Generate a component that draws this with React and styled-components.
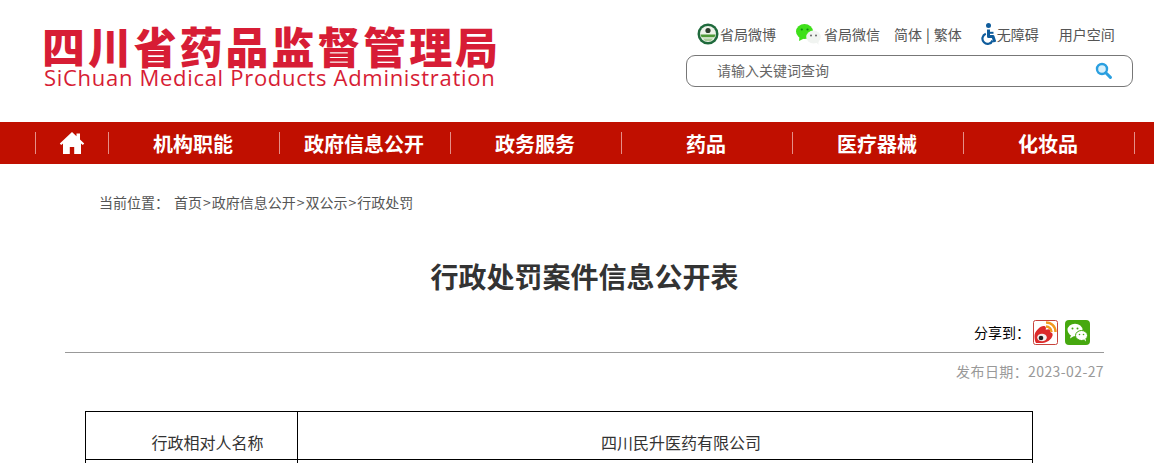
import React from 'react';
import styled, { createGlobalStyle } from 'styled-components';

const GlobalStyle = createGlobalStyle`
  html, body {
    margin: 0;
    padding: 0;
    height: 463px;
    overflow: hidden;
    background: #fff;
    font-family: "Noto Sans CJK SC", "Liberation Sans", sans-serif;
  }
`;

const Page = styled.div`
  width: 1154px;
`;

const Header = styled.header`
  height: 122px;
  display: flex;
  justify-content: space-between;
  padding: 0 21px 0 42px;
  box-sizing: border-box;
`;

const Logo = styled.div`
  display: flex;
  flex-direction: column;
  padding-top: 22px;
  color: #d71d35;
`;

const LogoCn = styled.div`
  font-size: 43px;
  line-height: 46px;
  font-weight: 900;
  letter-spacing: 2.9px;
  white-space: nowrap;
`;

const LogoEn = styled.div`
  font-family: "Open Sans", sans-serif;
  font-size: 22px;
  line-height: 18px;
  font-weight: 500;
  letter-spacing: 0.7px;
  white-space: nowrap;
  margin-left: 2px;
`;

const Tools = styled.div`
  width: 447px;
  padding-top: 21px;
`;

const LinkRow = styled.div`
  display: flex;
  align-items: center;
  height: 26px;
  font-size: 14px;
  color: #555;
  white-space: nowrap;
`;

const ToolLink = styled.span`
  display: flex;
  align-items: center;
  margin-left: ${(p) => p.$left}px;
`;

const LangBar = styled.span`
  margin: 0 4px;
  color: #333;
`;

const WechatLabel = styled.span`
  margin-left: 3px;
`;

const SearchBox = styled.div`
  margin-top: 8px;
  height: 32px;
  box-sizing: border-box;
  border: 1px solid #777;
  border-radius: 9px;
  display: flex;
  align-items: center;
  justify-content: space-between;
  padding: 0 20px 2px 30px;
  font-size: 14px;
  color: #666;
`;

const Nav = styled.nav`
  height: 42px;
  background: #c00f00;
  display: flex;
  padding-left: 35px;
  align-items: center;
`;

const NavItem = styled.div`
  width: ${(p) => p.$width}px;
  height: 22px;
  box-sizing: border-box;
  border-left: 1px solid #e58f88;
  border-right: ${(p) => (p.$last ? '1px solid #e58f88' : 'none')};
  padding-right: ${(p) => (p.$home ? 0 : 2)}px;
  display: flex;
  align-items: center;
  justify-content: center;
  color: #fff;
  font-size: 20px;
  font-weight: 700;
`;

const Crumbs = styled.div`
  padding: 28px 0 0 99px;
  font-size: 14px;
  line-height: 20px;
  color: #555;
`;

const CrumbLabel = styled.span`
  margin-right: 5px;
`;

const CrumbSep = styled.span`
  padding: 0 1px;
`;

const Article = styled.main`
  margin: 0 50px 0 65px;
`;

const Title = styled.h1`
  margin: 42px 0 0;
  text-align: center;
  font-size: 28px;
  line-height: 44px;
  font-weight: 700;
  color: #333;
`;

const ShareRow = styled.div`
  display: flex;
  justify-content: flex-end;
  align-items: center;
  height: 28px;
  margin-top: 20px;
  padding: 0 14px 6px 0;
  border-bottom: 1px solid #999;
  font-size: 14px;
  color: #000;
`;

const ShareIcon = styled.svg`
  width: 25px;
  height: 25px;
  margin-left: ${(p) => p.$left}px;
`;

const DateLine = styled.div`
  margin-top: 8px;
  text-align: right;
  font-size: 14px;
  line-height: 20px;
  color: #999;
  letter-spacing: 0.4px;
`;

const Table = styled.table`
  margin: 30px 0 0 20px;
  width: 948px;
  border-collapse: collapse;
  table-layout: fixed;
  font-size: 16px;
  color: #333;
`;

const Cell = styled.td`
  border: 1px solid #000;
  height: 48px;
  box-sizing: border-box;
  padding: 13px 0 0;
  text-align: center;
  text-indent: 32px;
  line-height: 30px;
  width: ${(p) => (p.$narrow ? '212px' : 'auto')};
`;

const WeiboBadge = () => (
  <svg width="22" height="22" viewBox="0 0 22 22" style={{ marginRight: 1 }}>
    <circle cx="11" cy="11" r="10.500" fill="#1f6a3c" />
    <circle cx="11" cy="11" r="8" fill="#eef3ea" />
    <circle cx="11" cy="7.500" r="2.600" fill="#2c3d2c" />
    <path d="M3.500 11.500h15l-1 2.800h-13z" fill="#4f9a38" />
    <path d="M6 15.500h10l-2 2.500H8z" fill="#a9cf9c" />
  </svg>
);

const WechatBubbles = () => (
  <svg width="25" height="21" viewBox="0 0 25 21">
    <ellipse cx="8.500" cy="7.500" rx="8.500" ry="7.500" fill="#3fe01a" />
    <path d="M3.500 12.500l-.5 4.500 5-2.500z" fill="#3fe01a" />
    <circle cx="5.800" cy="5.500" r="1.100" fill="#0c8a10" />
    <circle cx="11.500" cy="5.500" r="1.100" fill="#0c8a10" />
    <ellipse cx="17.500" cy="13" rx="7.300" ry="6.500" fill="#f1f4f1" />
    <path d="M20 18l2.500 3-.2-4.500z" fill="#f1f4f1" />
    <circle cx="15" cy="11.500" r="1" fill="#666" />
    <circle cx="20" cy="11.500" r="1" fill="#666" />
  </svg>
);

const WheelchairIcon = () => (
  <svg width="18" height="22" viewBox="0 0 18 22">
    <circle cx="9.500" cy="2.600" r="2.500" fill="#0f5c9c" />
    <path d="M9.500 6.500v7h4.500l1.800 5.500" fill="none" stroke="#0f5c9c" strokeWidth="3" strokeLinejoin="round" />
    <path d="M9.500 9.800h5" stroke="#0f5c9c" strokeWidth="2" />
    <path d="M6.800 10.800a5.200 5.200 0 1 0 6.700 6.700" fill="none" stroke="#0f5c9c" strokeWidth="2.200" />
  </svg>
);

const SearchIcon = () => (
  <svg width="17" height="17" viewBox="0 0 17 17">
    <circle cx="7" cy="7" r="5" fill="#d8f0fb" stroke="#2a9fe0" strokeWidth="2.400" />
    <path d="M10.800 10.800l4.600 4.600" stroke="#2a9fe0" strokeWidth="3" strokeLinecap="round" />
  </svg>
);

const HomeIcon = () => (
  <svg width="26" height="24" viewBox="0 0 26 24">
    <path d="M13 1L0.800 12.500l1.400 1.600L4 12.600V23h6.800v-7h4.400v7H22V12.600l1.800 1.500 1.400-1.600L21 8.600V2.500h-3.500v2.800z" fill="#fff" />
  </svg>
);

const navItems = ['机构职能', '政府信息公开', '政务服务', '药品', '医疗器械', '化妆品'];

const App = () => (
  <Page>
    <GlobalStyle />
    <Header>
      <Logo>
        <LogoCn>四川省药品监督管理局</LogoCn>
        <LogoEn>SiChuan Medical Products Administration</LogoEn>
      </Logo>
      <Tools>
        <LinkRow>
          <ToolLink $left={11}><WeiboBadge />省局微博</ToolLink>
          <ToolLink $left={20}><WechatBubbles /><WechatLabel>省局微信</WechatLabel></ToolLink>
          <ToolLink $left={14}>简体<LangBar>|</LangBar>繁体</ToolLink>
          <ToolLink $left={17}><WheelchairIcon />无障碍</ToolLink>
          <ToolLink $left={20}>用户空间</ToolLink>
        </LinkRow>
        <SearchBox>
          请输入关键词查询
          <SearchIcon />
        </SearchBox>
      </Tools>
    </Header>
    <Nav>
      <NavItem $home $width={73}><HomeIcon /></NavItem>
      {navItems.map((item, i) => (
        <NavItem key={item} $width={i === navItems.length - 1 ? 172 : 171} $last={i === navItems.length - 1}>
          {item}
        </NavItem>
      ))}
    </Nav>
    <Crumbs>
      <CrumbLabel>当前位置：</CrumbLabel>首页<CrumbSep>&gt;</CrumbSep>政府信息公开<CrumbSep>&gt;</CrumbSep>双公示<CrumbSep>&gt;</CrumbSep>行政处罚
    </Crumbs>
    <Article>
      <Title>行政处罚案件信息公开表</Title>
      <ShareRow>
        分享到：
        <ShareIcon $left={3} viewBox="0 0 25 25">
          <rect x="0.500" y="0.500" width="24" height="24" rx="2" fill="#fff" stroke="#c8433c" />
          <path d="M1.500 16c0-5 6-10 9-10 2.500 0 2.800 2 2.200 3.800 3.300-1.200 5.500-.3 4.500 2.200 2.300.6 2.800 2.300 2.300 3.800-1 3.600-5.500 7.200-10 7.200H3c-1-1.500-1.500-4-1.500-7z" fill="#dc2a2a" />
          <ellipse cx="9" cy="17.500" rx="4.800" ry="3.800" fill="#f4eeee" />
          <circle cx="8" cy="18" r="2.300" fill="#222" />
          <path d="M13 2.500c5.500 0 9.500 4 9.500 9.500M13 6.500c3 0 5.500 2.500 5.500 5.500" fill="none" stroke="#f29a1f" strokeWidth="2.400" />
        </ShareIcon>
        <ShareIcon $left={7} viewBox="0 0 25 25">
          <rect width="25" height="25" rx="4" fill="#46a80f" />
          <ellipse cx="10" cy="10" rx="7.500" ry="6.300" fill="#fff" />
          <path d="M6 15l-1 3.500 4-2.500z" fill="#fff" />
          <ellipse cx="16.500" cy="15.500" rx="6" ry="5" fill="#fff" stroke="#46a80f" />
          <path d="M19 19.500l2 2-.5-3z" fill="#fff" />
          <circle cx="7.500" cy="8.500" r="1" fill="#46a80f" />
          <circle cx="12.500" cy="8.500" r="1" fill="#46a80f" />
          <circle cx="14.500" cy="14.500" r=".8" fill="#46a80f" />
          <circle cx="18.500" cy="14.500" r=".8" fill="#46a80f" />
        </ShareIcon>
      </ShareRow>
      <DateLine>发布日期：2023-02-27</DateLine>
      <Table>
        <tbody>
          <tr>
            <Cell $narrow>行政相对人名称</Cell>
            <Cell>四川民升医药有限公司</Cell>
          </tr>
          <tr>
            <Cell $narrow />
            <Cell />
          </tr>
        </tbody>
      </Table>
    </Article>
  </Page>
);

export default App;
